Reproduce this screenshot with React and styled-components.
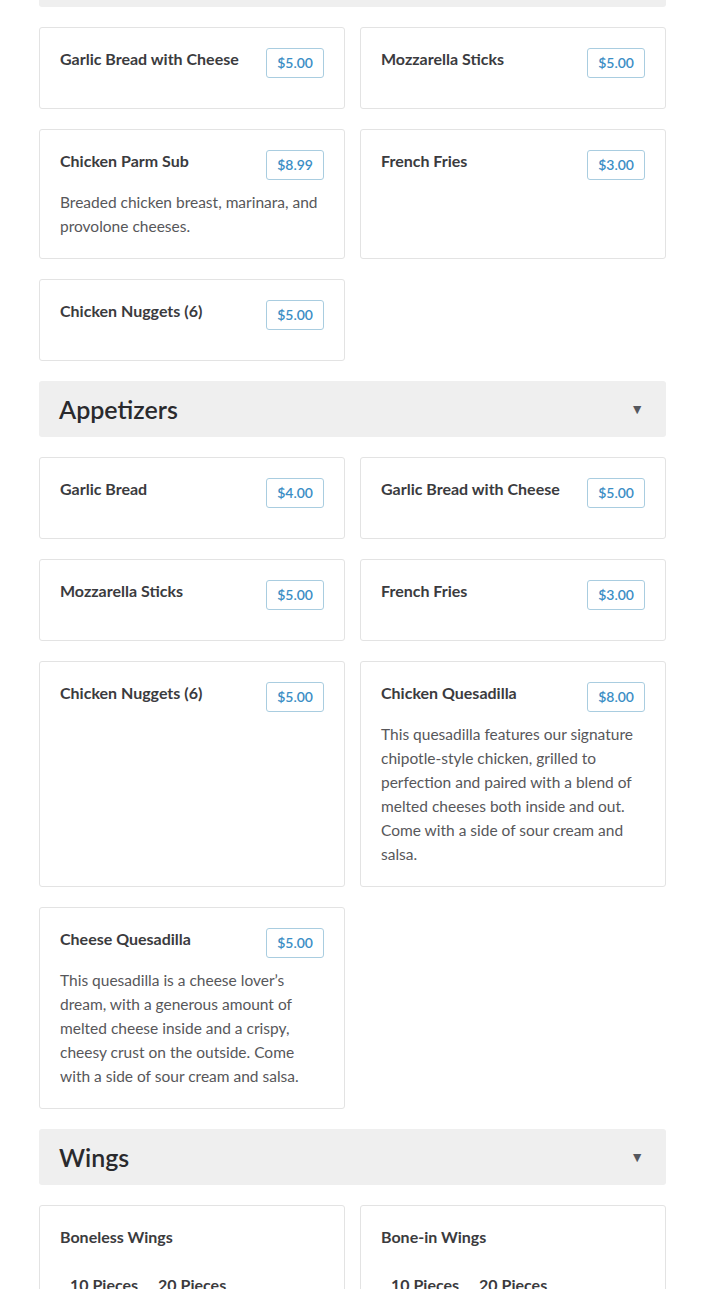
import React from "react";
import styled, { createGlobalStyle } from "styled-components";

const Global = createGlobalStyle`
  html, body { margin: 0; padding: 0; background: #ffffff; }
  body { font-family: Lato, "Open Sans", "Liberation Sans", sans-serif; color: #3a3a3c; }
  * { box-sizing: border-box; }
`;

const Page = styled.main`
  width: 627px;
  margin: -49px auto 0;
  display: flex;
  flex-direction: column;
  gap: 20px;
  padding-bottom: 40px;
`;

const Section = styled.section`
  display: flex;
  flex-direction: column;
  gap: 20px;
`;

const SectionHeader = styled.header`
  height: 56px;
  background: #efefef;
  border-radius: 3px;
  display: flex;
  align-items: center;
  justify-content: space-between;
  padding: 0 22px 0 20px;
`;

const SectionTitle = styled.h2`
  margin: 0;
  font-size: 25px;
  font-weight: 600;
  line-height: 30px;
  color: #2a2a2d;
`;

const Caret = styled.span`
  font-size: 14px;
  color: #55585e;
  line-height: 1;
`;

const Grid = styled.div`
  display: grid;
  grid-template-columns: 1fr 1fr;
  column-gap: 15px;
  row-gap: 20px;
`;

const Card = styled.article`
  border: 1px solid #e3e3e3;
  border-radius: 3px;
  background: #fff;
  padding: 20px;
`;

const CardHead = styled.div`
  display: flex;
  align-items: flex-start;
  justify-content: space-between;
  gap: 12px;
  margin-bottom: 10px;
`;

const ItemName = styled.h3`
  margin: 0;
  font-size: 16px;
  font-weight: 700;
  line-height: 22px;
  color: #3b3b3e;
`;

const Price = styled.span`
  flex: none;
  height: 30px;
  padding: 0 10px;
  border: 1px solid #a9cde0;
  border-radius: 3px;
  font-size: 14px;
  font-weight: 600;
  line-height: 28px;
  color: #3b8ec5;
`;

const Desc = styled.p`
  margin: 0;
  font-size: 15.5px;
  line-height: 24px;
  color: #57575a;
`;

const Options = styled.div`
  display: flex;
  margin-top: 17px;
`;

const Option = styled.button`
  background: none;
  border: none;
  font-family: inherit;
  font-size: 16px;
  font-weight: 700;
  line-height: 20px;
  color: #3b3b3e;
  padding: 10px 10px;
`;

const sections = [
  {
    title: "Sides",
    items: [
      { name: "Garlic Bread with Cheese", price: "$5.00" },
      { name: "Mozzarella Sticks", price: "$5.00" },
      { name: "Chicken Parm Sub", price: "$8.99", desc: "Breaded chicken breast, marinara, and provolone cheeses." },
      { name: "French Fries", price: "$3.00" },
      { name: "Chicken Nuggets (6)", price: "$5.00" },
    ],
  },
  {
    title: "Appetizers",
    items: [
      { name: "Garlic Bread", price: "$4.00" },
      { name: "Garlic Bread with Cheese", price: "$5.00" },
      { name: "Mozzarella Sticks", price: "$5.00" },
      { name: "French Fries", price: "$3.00" },
      { name: "Chicken Nuggets (6)", price: "$5.00" },
      {
        name: "Chicken Quesadilla",
        price: "$8.00",
        desc: "This quesadilla features our signature chipotle-style chicken, grilled to perfection and paired with a blend of melted cheeses both inside and out. Come with a side of sour cream and salsa.",
      },
      {
        name: "Cheese Quesadilla",
        price: "$5.00",
        desc: "This quesadilla is a cheese lover\u2019s dream, with a generous amount of melted cheese inside and a crispy, cheesy crust on the outside. Come with a side of sour cream and salsa.",
      },
    ],
  },
  {
    title: "Wings",
    items: [
      { name: "Boneless Wings", options: ["10 Pieces", "20 Pieces"] },
      { name: "Bone-in Wings", options: ["10 Pieces", "20 Pieces"] },
    ],
  },
];

export default function App() {
  return (
    <>
      <Global />
      <Page>
        {sections.map((s) => (
          <Section key={s.title}>
            <SectionHeader>
              <SectionTitle>{s.title}</SectionTitle>
              <Caret>▼</Caret>
            </SectionHeader>
            <Grid>
              {s.items.map((it, i) => (
                <Card key={i}>
                  <CardHead>
                    <ItemName>{it.name}</ItemName>
                    {it.price && <Price>{it.price}</Price>}
                  </CardHead>
                  {it.desc && <Desc>{it.desc}</Desc>}
                  {it.options && (
                    <Options>
                      {it.options.map((o) => (
                        <Option key={o}>{o}</Option>
                      ))}
                    </Options>
                  )}
                </Card>
              ))}
            </Grid>
          </Section>
        ))}
      </Page>
    </>
  );
}
